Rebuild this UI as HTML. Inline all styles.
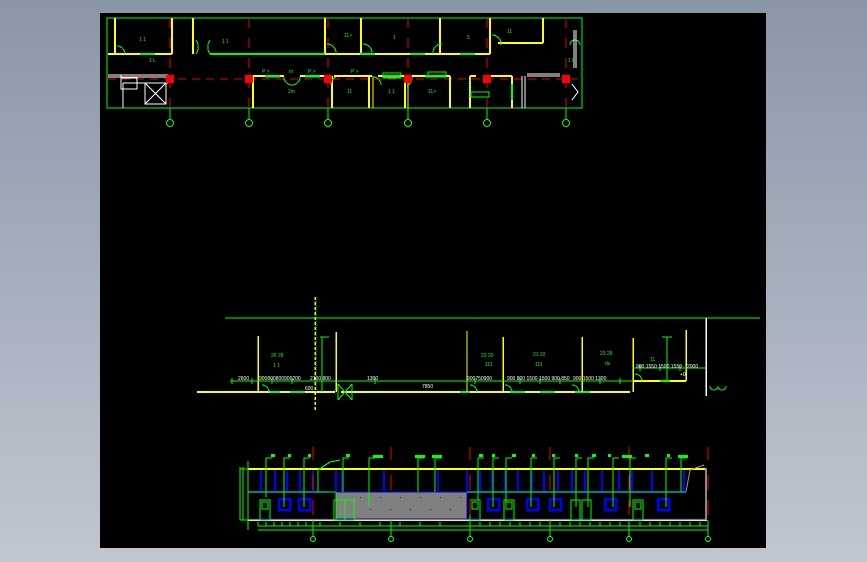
<!DOCTYPE html>
<html><head><meta charset="utf-8"><style>
html,body{margin:0;padding:0;}
body{width:867px;height:562px;overflow:hidden;background:linear-gradient(#8a96a8,#c1c7d1);}
svg{display:block;}
text{font-family:"Liberation Sans",sans-serif;font-size:5px;}
</style></head><body>
<svg width="867" height="562" viewBox="0 0 867 562" xmlns="http://www.w3.org/2000/svg" shape-rendering="crispEdges">
<rect x="100" y="13" width="666" height="535" fill="#000"/>

<!-- ============ TOP PLAN ============ -->
<g fill="none">
<rect x="107" y="18" width="475" height="90" stroke="#00ff00" stroke-width="1"/>
<path d="M108 79 H582" stroke="#e00" stroke-width="1" stroke-dasharray="8,6"/>
<path d="M170 18V108 M249 18V108 M328 18V108 M408 18V108 M487 18V108 M566 18V108" stroke="#e00" stroke-width="1" stroke-dasharray="10,10"/>
<path d="M115 18V54 M172 18V54 M193 18V54 M325 18V54 M361 18V54 M440 18V54 M490 18V54 M543 18V43 M498 43H543" stroke="#ffff00" stroke-width="2"/>
<path d="M108 54H172 M325 54H490" stroke="#ffff00" stroke-width="2"/>
<path d="M210 54H325" stroke="#00ff00" stroke-width="2"/>
<path d="M140 54H155 M360 54H375 M410 54H425 M460 54H475" stroke="#00ff00" stroke-width="2"/>
<path d="M253 76H284 M300 76H330 M334 76H372 M378 76H404 M412 76H450 M470 76H476 M490 76H512" stroke="#ffff00" stroke-width="2"/>
<path d="M265 76H280 M305 76H320 M383 76H400 M425 76H446" stroke="#00ff00" stroke-width="2.5"/>
<path d="M253 76V108 M332 76V108 M369 76V108 M405 76V108 M450 76V108 M470 76V108 M512 76V108" stroke="#ffff00" stroke-width="2"/>
<path d="M373 76V108 M408 76V108" stroke="#ffff00" stroke-width="1"/>
<path d="M512 84V100" stroke="#00ff00" stroke-width="2"/>
<rect x="383" y="73" width="18" height="5" stroke="#00ff00"/>
<rect x="428" y="72" width="18" height="5" stroke="#00ff00"/>
<rect x="471" y="92" width="18" height="5" stroke="#00ff00"/>
<path d="M470 76V97" stroke="#00ff00" stroke-dasharray="1,1"/>
<path d="M117 46a8 8 0 0 1 8 8 M196 40a12 12 0 0 1 0 14 M210 40a12 12 0 0 0 0 14 M327 44a9 9 0 0 1 9 10 M363 44a9 9 0 0 1 9 10 M442 44a9 9 0 0 0 -9 10 M492 35a9 9 0 0 1 9 10 M284 77a8 8 0 0 0 8 8 M300 77a8 8 0 0 1 -8 8 M336 77a8 8 0 0 0 -5 8 M373 77a8 8 0 0 1 8 8 M412 77a9 9 0 0 1 -5 9 M570 45a5 5 0 0 1 10 0" stroke="#00ff00" stroke-width="1"/>
<path d="M108 75H168 M108 77H168 M123 83H168 M123 108V83 M145 83H166V104H145Z M145 83L166 104 M166 83L145 104 M121 75V89H137V78H121" stroke="#fff" stroke-width="1"/>
<path d="M527 76H560 M527 74H560 M522 76V108 M525 76V108 M574 30V68 M576 30V68 M572 84L578 92 L572 100" stroke="#fff" stroke-width="1"/>
<g fill="#f00" stroke="none">
<rect x="166" y="75" width="8" height="8"/><rect x="245" y="75" width="8" height="8"/><rect x="324" y="75" width="8" height="8"/><rect x="404" y="75" width="8" height="8"/><rect x="483" y="75" width="8" height="8"/><rect x="562" y="75" width="8" height="8"/>
</g>
<path d="M170 108V120 M249 108V120 M328 108V120 M408 108V120 M487 108V120 M566 108V120" stroke="#00ff00" stroke-width="1"/>
<g stroke="#00ff00" stroke-width="1"><circle cx="170" cy="123" r="3.5"/><circle cx="249" cy="123" r="3.5"/><circle cx="328" cy="123" r="3.5"/><circle cx="408" cy="123" r="3.5"/><circle cx="487" cy="123" r="3.5"/><circle cx="566" cy="123" r="3.5"/></g>
</g>
<g fill="#00ff00">
<text x="139" y="41">1 1</text><text x="222" y="43">1 1</text><text x="344" y="37">11&gt;</text><text x="393" y="39">1</text><text x="467" y="39">5</text><text x="507" y="33">11</text>
<text x="262" y="73">P &gt;</text><text x="289" y="73">m</text><text x="308" y="73">P &gt;</text><text x="351" y="73">P &gt;</text><text x="288" y="93">2m</text><text x="347" y="93">11</text><text x="388" y="93">1 1</text><text x="428" y="93">11&gt;</text>
<text x="149" y="62" font-size="7">1 L</text><text x="568" y="62" font-size="7">1 L</text>
</g>

<!-- ============ MIDDLE SECTION ============ -->
<g fill="none">
<path d="M225 318H760" stroke="#00ff00" stroke-width="1"/>
<path d="M706 318V396" stroke="#fff" stroke-width="1.5"/>
<path d="M197 392H335 M341 392H630" stroke="#ffff00" stroke-width="2"/>
<path d="M633 381H686" stroke="#ffff00" stroke-width="2"/>
<path d="M270 392H280 M290 392H305 M460 392H470 M510 392H525 M540 392H555 M575 392H590 M660 381H670" stroke="#00ff00" stroke-width="2"/>
<path d="M258 336V392 M336 332V392 M503 337V392 M582 337V392 M633 338V392 M686 330V381" stroke="#ffff00" stroke-width="1.5"/>
<path d="M467 331V392" stroke="#ffff00" stroke-width="1"/>
<path d="M315 297V410" stroke="#ffff00" stroke-width="1.5" stroke-dasharray="3,2"/>
<path d="M316 297V392" stroke="#00ff00" stroke-width="1" stroke-dasharray="1,1"/>
<path d="M230 381H633 M633 368H706" stroke="#00ff00" stroke-width="1"/>
<path d="M322 337V392 M320 337H329 M667 337V380 M662 337H672" stroke="#00ff00" stroke-width="1"/>
<path d="M232 378V384 M252 378V384 M272 378V384 M292 378V384 M375 378V384 M475 378V384 M520 378V384 M540 378V384 M560 378V384 M600 378V384 M620 378V384 M640 365V371 M660 365V371 M680 365V371" stroke="#00ff00" stroke-width="1"/>
<path d="M338 384L352 400 M352 384L338 400 M338 384V400 M352 384V400" stroke="#00ff00" stroke-width="1"/>
<path d="M262 385a7 7 0 0 1 7 7 M470 385a7 7 0 0 1 7 7 M505 385a7 7 0 0 1 7 7 M572 385a7 7 0 0 1 7 7 M635 374a7 7 0 0 1 7 7 M710 386a4 4 0 0 0 8 0 a4 4 0 0 0 8 0" stroke="#00ff00" stroke-width="1"/>
</g>
<g fill="#fff" font-size="5">
<text x="238" y="380">2600</text><text x="259" y="380">900800800900200</text><text x="310" y="380">2100 800</text><text x="367" y="380">1300</text><text x="422" y="388">7850</text>
<text x="467" y="380">900750900</text><text x="507" y="380">900 800 1500 1500 900 850</text><text x="573" y="380">900 1500 1300</text><text x="636" y="368">900 1550 1500 1550</text><text x="687" y="368">2000</text>
<text x="305" y="390">600</text><text x="680" y="376">+0</text>
</g>
<g fill="#00ff00" font-size="6">
<text x="271" y="357">26 28</text><text x="273" y="367">1 1</text><text x="481" y="357">23 20</text><text x="485" y="366">111</text>
<text x="533" y="356">21 22</text><text x="535" y="366">111</text><text x="600" y="355">23 28</text><text x="605" y="365">ds</text><text x="650" y="361">11</text>
</g>

<!-- ============ BOTTOM ELEVATION ============ -->
<g fill="none">
<rect x="336" y="492" width="131" height="28" fill="#808080" stroke="#0000ff" stroke-width="1"/>
<path d="M248 469H707" stroke="#ffff00" stroke-width="2"/>
<path d="M248 520H707" stroke="#ffff00" stroke-width="1.5"/>
<path d="M248 492H336 M467 492H686" stroke="#00ffff" stroke-width="1"/>
<path d="M248 519H707" stroke="#0000ff" stroke-width="1"/>
<g stroke="#0000ff" stroke-width="2">
<path d="M261 470V491 M275 470V491 M287 470V491 M300 470V491 M313 470V491 M336 470V491 M342 470V491 M384 470V491 M438 470V491 M467 470V491 M480 470V491 M492 470V491 M505 470V491 M518 470V491 M532 470V491 M544 470V491 M558 470V491 M572 470V491 M585 470V491 M602 470V491 M619 470V491 M632 470V491 M652 470V491 M684 470V491"/>
</g>
<g stroke="#0000ff" stroke-width="2.5">
<rect x="279" y="499" width="11" height="11"/><rect x="299" y="499" width="11" height="11"/><rect x="488" y="499" width="11" height="11"/><rect x="527" y="499" width="11" height="11"/><rect x="550" y="499" width="11" height="11"/><rect x="605" y="499" width="11" height="11"/><rect x="658" y="499" width="11" height="11"/>
</g>
<g stroke="#00ff00" stroke-width="1">
<rect x="260" y="500" width="10" height="20"/><rect x="262" y="502" width="6" height="7"/>
<rect x="470" y="500" width="10" height="20"/><rect x="472" y="502" width="6" height="7"/>
<rect x="504" y="500" width="10" height="20"/><rect x="506" y="502" width="6" height="7"/>
<rect x="571" y="500" width="9" height="20"/><rect x="582" y="500" width="9" height="20"/>
<rect x="633" y="500" width="10" height="20"/><rect x="635" y="502" width="6" height="7"/>
<rect x="334" y="500" width="20" height="20"/><path d="M345 500V520"/>
<path d="M329 492H336V520 M240 467V520 M243 467V520 M240 469H248 M240 520H248 M248 461V530"/>
<path d="M266 497V458H272 M284 507V458H290 M304 507V458H310 M343 492V458H349 M369 507V458H375 M418 492V458H424 M435 492V458H441 M493 507V458H499 M506 507V458H512 M531 507V458H537 M554 507V458H560 M576 507V458H582 M588 507V458H594 M613 507V458H619 M630 507V458H636 M666 507V458H672 M681 492V458H687 M478 500V458H484"/>
<path d="M318 492V470 L330 462 L340 460"/>
<path d="M258 526H708 M258 530H708 M313 520V536 M391 520V536 M470 520V536 M550 520V536 M629 520V536 M708 520V536"/>
<path d="M258 522V526 M266 522V526 M274 522V526 M282 522V526 M290 522V526 M298 522V526 M306 522V526 M320 522V526 M340 522V526 M360 522V526 M380 522V526 M400 522V526 M420 522V526 M440 522V526 M480 522V526 M490 522V526 M500 522V526 M510 522V526 M520 522V526 M530 522V526 M540 522V526 M560 522V526 M570 522V526 M580 522V526 M590 522V526 M600 522V526 M610 522V526 M620 522V526 M640 522V526 M650 522V526 M660 522V526 M670 522V526 M680 522V526 M690 522V526 M700 522V526"/>
<circle cx="313" cy="539" r="2.5"/><circle cx="391" cy="539" r="2.5"/><circle cx="470" cy="539" r="2.5"/><circle cx="550" cy="539" r="2.5"/><circle cx="629" cy="539" r="2.5"/><circle cx="708" cy="539" r="2.5"/>
</g>
<path d="M686 492L690 470 L704 465" stroke="#999" stroke-width="1"/>
<path d="M706 468V520" stroke="#888" stroke-width="2"/>
<path d="M313 447V460 M313 475V490 M313 500V515 M391 447V460 M391 475V490 M470 447V460 M470 475V490 M470 500V515 M550 447V460 M550 475V490 M629 447V460 M629 475V490 M629 500V515 M708 447V460 M708 475V490 M708 500V515" stroke="#e00" stroke-width="1"/>
</g>
<g fill="#00ff00">
<rect x="271" y="454" width="4" height="3"/><rect x="288" y="454" width="3" height="3"/><rect x="308" y="454" width="3" height="3"/><rect x="346" y="454" width="4" height="3"/><rect x="373" y="455" width="10" height="3"/><rect x="415" y="455" width="10" height="3"/><rect x="432" y="455" width="10" height="3"/><rect x="479" y="454" width="4" height="3"/><rect x="492" y="454" width="3" height="3"/><rect x="512" y="454" width="4" height="3"/><rect x="532" y="454" width="3" height="3"/><rect x="552" y="454" width="3" height="3"/><rect x="575" y="454" width="3" height="3"/><rect x="592" y="454" width="4" height="3"/><rect x="608" y="454" width="3" height="3"/><rect x="622" y="455" width="10" height="3"/><rect x="645" y="454" width="4" height="3"/><rect x="667" y="454" width="3" height="3"/><rect x="678" y="455" width="10" height="3"/>
</g>
<g fill="#222">
<rect x="360" y="497" width="1" height="1"/><rect x="380" y="497" width="1" height="1"/><rect x="400" y="497" width="1" height="1"/><rect x="420" y="497" width="1" height="1"/><rect x="440" y="497" width="1" height="1"/><rect x="460" y="497" width="1" height="1"/><rect x="370" y="509" width="1" height="1"/><rect x="390" y="509" width="1" height="1"/><rect x="410" y="509" width="1" height="1"/><rect x="430" y="509" width="1" height="1"/><rect x="450" y="509" width="1" height="1"/>
</g>
</svg>
</body></html>
